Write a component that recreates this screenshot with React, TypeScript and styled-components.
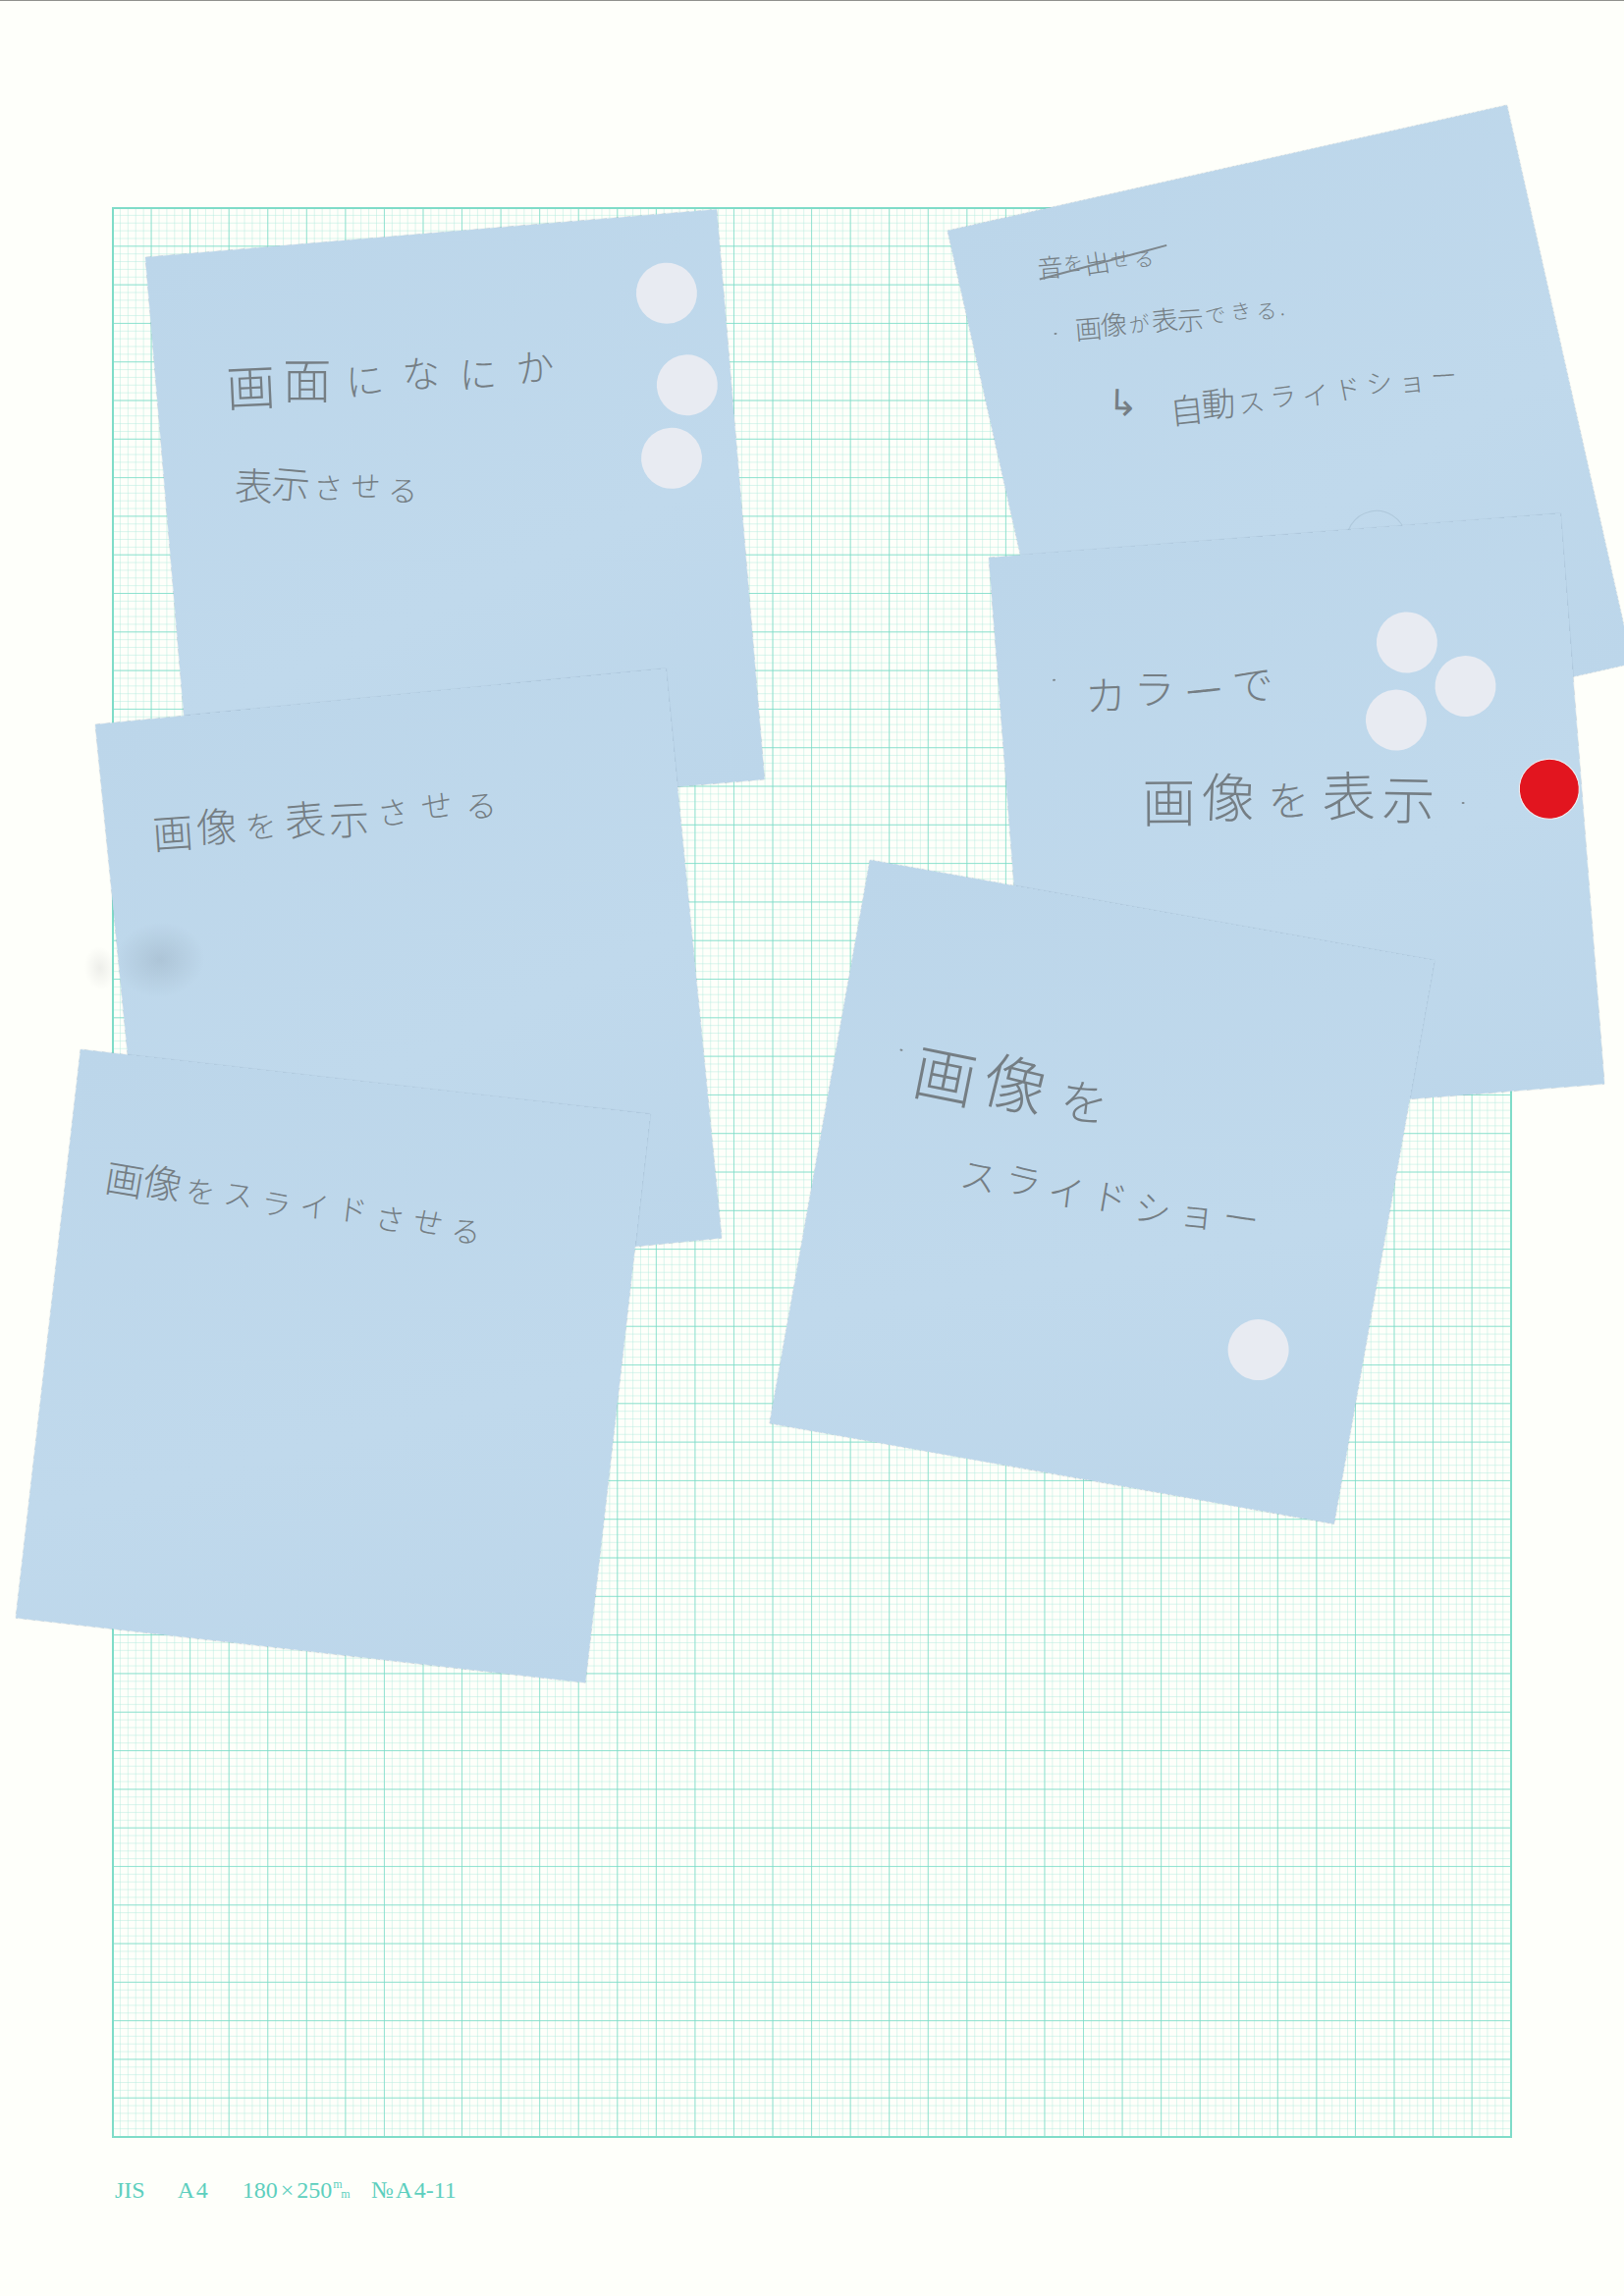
import React from "react";
import styled, { createGlobalStyle } from "styled-components";

const Global = createGlobalStyle`
  html, body { margin: 0; padding: 0; background: #fefffa; }
`;

const Page = styled.main`
  position: relative;
  width: 1654px;
  height: 2339px;
  overflow: hidden;
  box-sizing: border-box;
  padding: 210px 114px 0 114px;
  background: #fefffa;
  border-top: 1px solid #8f908c;
`;

const GraphPaper = styled.svg`
  display: block;
  width: 1426px;
  height: 1967px;
`;

const Imprint = styled.footer`
  display: flex;
  align-items: center;
  margin: 40px 0 0 3px;
  font-family: "Liberation Serif", serif;
  font-size: 24px;
  line-height: 26px;
  color: #5ccfbe;
`;

const ImprintPart = styled.span<{ $gap: number }>`
  display: inline-flex;
  align-items: center;
  margin-right: ${(p) => p.$gap}px;
  word-spacing: -3px;
`;

const Times = styled.span`
  margin: 0 3px;
`;

const Fraction = styled.span`
  display: inline-block;
  font-size: 12px;
  line-height: 10px;
  margin-left: 1px;
  letter-spacing: -0.5px;
  transform: translateY(-1px);
`;

const FractionBottom = styled.span`
  display: block;
  padding-left: 8px;
`;

const Desk = styled.div`
  position: absolute;
  inset: 0;
`;

const Note = styled.article<{ $x: number; $y: number; $angle: number }>`
  position: absolute;
  left: ${(p) => p.$x}px;
  top: ${(p) => p.$y}px;
  width: 584px;
  height: 583px;
  display: flex;
  flex-direction: column;
  align-items: flex-start;
  transform-origin: 0 0;
  transform: rotate(${(p) => p.$angle}deg);
  background: linear-gradient(160deg, #bcd6ea 0%, #c0d9ec 60%, #bcd6ea 100%);
  box-shadow: 0 0 1px rgba(85, 110, 135, 0.55);
`;

const Sticker = styled.i<{ $u: number; $v: number; $red?: boolean }>`
  position: absolute;
  left: ${(p) => p.$u - 31}px;
  top: ${(p) => p.$v - 31}px;
  width: 62px;
  height: 62px;
  border-radius: 50%;
  box-sizing: border-box;
  background: ${(p) => (p.$red ? "#e2151f" : "#e8ebf2")};
  border: ${(p) => (p.$red ? "1px solid #f1f3f6" : "0")};
`;

const GhostSticker = styled.i<{ $u: number; $v: number }>`
  position: absolute;
  left: ${(p) => p.$u - 31}px;
  top: ${(p) => p.$v - 31}px;
  width: 62px;
  height: 62px;
  border-radius: 50%;
  box-sizing: border-box;
  border: 1px solid rgba(115, 140, 160, 0.22);
`;

const Scrawl = styled.p<{ $left: number; $top: number; $angle: number; $size: number; $gap: number; $struck?: boolean }>`
  position: relative;
  margin: ${(p) => p.$top}px 0 0 ${(p) => p.$left}px;
  display: flex;
  align-items: center;
  gap: ${(p) => p.$gap}px;
  white-space: nowrap;
  font-family: "Noto Sans CJK JP", "Noto Sans", sans-serif;
  font-weight: 300;
  font-size: ${(p) => p.$size}px;
  line-height: 1;
  color: #757e84;
  transform-origin: 0 50%;
  transform: rotate(${(p) => p.$angle}deg);

  ${(p) =>
    p.$struck
      ? `&::after {
          content: "";
          position: absolute;
          left: 0;
          top: calc(50% + 11px);
          width: 134px;
          height: 2px;
          background: #7d868c;
          transform-origin: 0 50%;
          transform: rotate(-9deg);
        }`
      : ""}
`;

const Glyph = styled.span`
  display: inline-block;
`;

const LeadMark = styled.i<{ $offset: number; $rise: number }>`
  position: absolute;
  right: 100%;
  top: 55%;
  margin: -${(p) => p.$rise}px ${(p) => p.$offset}px 0 0;
  width: 3px;
  height: 2px;
  border-radius: 50%;
  background: #7d868c;
`;

const TailMark = styled.i<{ $offset: number }>`
  width: 3px;
  height: 2px;
  margin: 24px 0 0 ${(p) => p.$offset}px;
  border-radius: 50%;
  background: #7d868c;
`;

const Smudge = styled.i`
  position: absolute;
  left: -60px;
  top: 180px;
  width: 170px;
  height: 130px;
  background:
    radial-gradient(ellipse 46px 38px at 60% 50%, rgba(105, 120, 135, 0.2), rgba(105, 120, 135, 0) 100%),
    radial-gradient(ellipse 16px 22px at 24% 52%, rgba(120, 120, 120, 0.12), rgba(120, 120, 120, 0) 100%);
`;

type WritingProps = {
  text: string;
  left: number;
  top: number;
  angle: number;
  size: number;
  gap: number;
  struck?: boolean;
  lead?: number;
  rise?: number;
  tail?: number;
};

function Handwriting({ text, left, top, angle, size, gap, struck, lead, rise = 0, tail }: WritingProps) {
  const chars = Array.from(text);
  return (
    <Scrawl $left={left} $top={top} $angle={angle} $size={size} $gap={gap} $struck={struck}>
      {lead !== undefined && <LeadMark $offset={lead} $rise={rise} />}
      {chars.map((c, i) => {
        const kanji = /[\u4e00-\u9fff]/.test(c);
        const tilt = (((i * 37 + 11) % 7) - 3) * 1.3;
        const lift = (((i * 53 + 7) % 5) - 2) * 0.035;
        const scale = kanji ? 1.08 : 0.84;
        return (
          <Glyph key={i} style={{ transform: `translateY(${lift}em) rotate(${tilt}deg) scale(${scale})` }}>
            {c}
          </Glyph>
        );
      })}
      {tail !== undefined && <TailMark $offset={tail} />}
    </Scrawl>
  );
}

export default function App() {
  return (
    <Page>
      <Global />
      <GraphPaper viewBox="0 0 1426 1967" aria-hidden="true">
        <defs>
          <pattern id="mm" width="7.912" height="7.86" patternUnits="userSpaceOnUse" patternTransform="translate(1 1)">
            <path d="M7.912 0V7.86M0 7.86H7.912" fill="none" stroke="#aeeadd" strokeWidth="0.9" />
          </pattern>
          <pattern id="cm" width="39.56" height="39.3" patternUnits="userSpaceOnUse" patternTransform="translate(1 1)">
            <path d="M39.56 0V39.3M0 39.3H39.56" fill="none" stroke="#78dbc6" strokeWidth="1.4" />
          </pattern>
        </defs>
        <rect x="1" y="1" width="1424" height="1965" fill="url(#mm)" />
        <rect x="1" y="1" width="1424" height="1965" fill="url(#cm)" />
        <rect x="1" y="1" width="1424" height="1965" fill="none" stroke="#7fdcc8" strokeWidth="2" />
      </GraphPaper>
      <Imprint>
        <ImprintPart $gap={33}>JIS</ImprintPart>
        <ImprintPart $gap={35}>A 4</ImprintPart>
        <ImprintPart $gap={22}>
          180<Times>×</Times>250
          <Fraction>
            m
            <FractionBottom>m</FractionBottom>
          </Fraction>
        </ImprintPart>
        <ImprintPart $gap={0}>№ A 4-11</ImprintPart>
      </Imprint>

      <Desk>
        <Note $x={148} $y={261} $angle={-4.8}>
          <Sticker $u={526} $v={81} />
          <Sticker $u={539} $v={176} />
          <Sticker $u={517} $v={249} />
          <Handwriting text="画面になにか" left={73} top={114.5} angle={0.8} size={46} gap={12} />
          <Handwriting text="表示させる" left={73} top={58.5} angle={5.8} size={36} gap={2} />
        </Note>

        <Note $x={965} $y={234} $angle={-12.66}>
          <GhostSticker $u={357} $v={404} />
          <Handwriting text="音を出せる" left={81.5} top={45.3} angle={6.66} size={24} gap={0} struck />
          <Handwriting text="画像が表示できる." left={105.7} top={44.4} angle={6.66} size={25} gap={1} lead={20} />
          <Handwriting text="↳" left={119} top={42.3} angle={12.66} size={44} gap={0} />
          <Handwriting text="自動スライドショー" left={182.4} top={-13.4} angle={5.36} size={32} gap={1} />
        </Note>

        <Note $x={97} $y={737} $angle={-5.6}>
          <Smudge />
          <Handwriting text="画像を表示させる" left={49} top={97.4} angle={0.3} size={38} gap={7} />
        </Note>

        <Note $x={1007} $y={567} $angle={-4.41}>
          <Sticker $u={418} $v={119} />
          <Sticker $u={473.5} $v={168} />
          <Sticker $u={400.5} $v={197} />
          <Sticker $u={551} $v={279} $red />
          <Handwriting text="カラーで" left={83} top={121.1} angle={0.91} size={50} gap={0} lead={25} rise={20} />
          <Handwriting text="画像を表示" left={138.5} top={62.3} angle={2.91} size={50} gap={11} tail={18} />
        </Note>

        <Note $x={886} $y={875} $angle={10.1}>
          <Sticker $u={477} $v={422} />
          <Handwriting text="画像を" left={85} top={170.8} angle={-0.1} size={58} gap={14} lead={18} rise={19} />
          <Handwriting text="スライドショー" left={144} top={45.3} angle={-0.4} size={44} gap={1} />
        </Note>

        <Note $x={82} $y={1068} $angle={6.5}>
          <Handwriting text="画像をスライドさせる" left={42.3} top={106} angle={1.7} size={36} gap={3} />
        </Note>
      </Desk>
    </Page>
  );
}
